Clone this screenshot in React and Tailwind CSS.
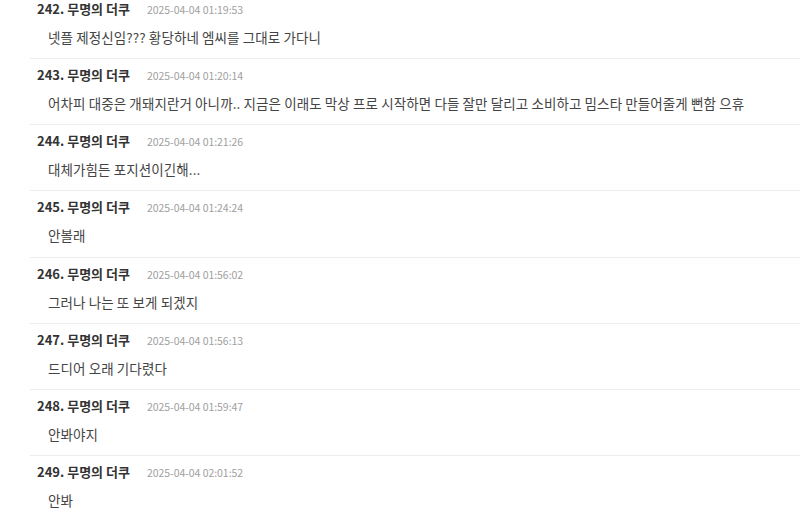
import React from "react";

const comments = [
  { no: 242, time: "2025-04-04 01:19:53", text: "넷플 제정신임??? 황당하네 엠씨를 그대로 가다니" },
  { no: 243, time: "2025-04-04 01:20:14", text: "어차피 대중은 개돼지란거 아니까.. 지금은 이래도 막상 프로 시작하면 다들 잘만 달리고 소비하고 밈스타 만들어줄게 뻔함 으휴" },
  { no: 244, time: "2025-04-04 01:21:26", text: "대체가힘든 포지션이긴해..." },
  { no: 245, time: "2025-04-04 01:24:24", text: "안볼래" },
  { no: 246, time: "2025-04-04 01:56:02", text: "그러나 나는 또 보게 되겠지" },
  { no: 247, time: "2025-04-04 01:56:13", text: "드디어 오래 기다렸다" },
  { no: 248, time: "2025-04-04 01:59:47", text: "안봐야지" },
  { no: 249, time: "2025-04-04 02:01:52", text: "안봐" },
];

const font = { fontFamily: '"Noto Sans CJK KR", "Noto Sans", sans-serif' };

function Comment({ no, time, text }) {
  return (
    <li className="h-[66.17px] border-b border-[#ececec] pl-[7px] pt-[7px]">
      <div className="flex h-[18px] items-baseline leading-[18px]">
        <span className="text-[13px] font-bold text-[#333]">{no}. 무명의 더쿠</span>
        <span className="ml-[17px] text-[10.5px] tracking-[-0.05px] text-[#a0a0a0]">{time}</span>
      </div>
      <p className="mt-[10px] pl-[11px] text-[13.5px] leading-[18px] tracking-[0.1px] text-[#444]">
        {text}
      </p>
    </li>
  );
}

export default function App() {
  return (
    <div className="h-[517px] w-[800px] overflow-hidden bg-white" style={font}>
      <ul className="-mt-[7px] pl-[30px]">
        {comments.map((c) => (
          <Comment key={c.no} {...c} />
        ))}
      </ul>
    </div>
  );
}
